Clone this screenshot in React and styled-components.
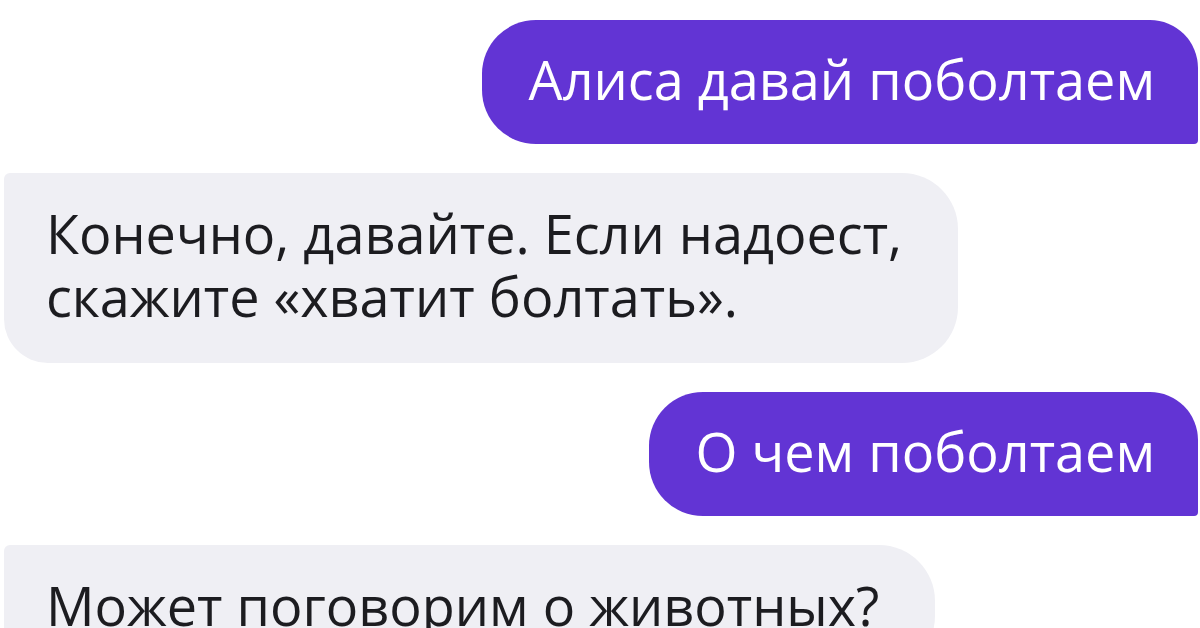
import React from "react";
import styled, { createGlobalStyle } from "styled-components";

const GlobalStyle = createGlobalStyle`
  body {
    margin: 0;
    background: #ffffff;
    font-family: "Open Sans", "Noto Sans", sans-serif;
  }
`;

const Chat = styled.div`
  width: 1200px;
  height: 628px;
  overflow: hidden;
  box-sizing: border-box;
  padding: 20px 2px 0 4px;
  display: flex;
  flex-direction: column;
  gap: 29px;
`;

const Bubble = styled.div`
  align-self: ${(p) => (p.$mine ? "flex-end" : "flex-start")};
  background: ${(p) => (p.$mine ? "#6234d4" : "#efeff4")};
  color: ${(p) => (p.$mine ? "#ffffff" : "#1c1c20")};
  border-radius: ${(p) => (p.$mine ? "54px 48px 4px 54px" : "6px 56px 56px 44px")};
  padding: ${(p) => (p.$mine ? "28px 43px 33px 46px" : "29px 56px 35px 42px")};
  font-size: 54px;
  line-height: 63px;
  flex-shrink: 0;
`;

const messages = [
  { mine: true, text: "Алиса давай поболтаем" },
  { mine: false, text: ["Конечно, давайте. Если надоест,", "скажите «хватит болтать»."] },
  { mine: true, text: "О чем поболтаем" },
  { mine: false, text: "Может поговорим о животных?" },
];

export default function App() {
  return (
    <>
      <GlobalStyle />
      <Chat>
        {messages.map((m, i) => (
          <Bubble key={i} $mine={m.mine}>
            {Array.isArray(m.text)
              ? m.text.map((line, j) => <div key={j}>{line}</div>)
              : m.text}
          </Bubble>
        ))}
      </Chat>
    </>
  );
}
